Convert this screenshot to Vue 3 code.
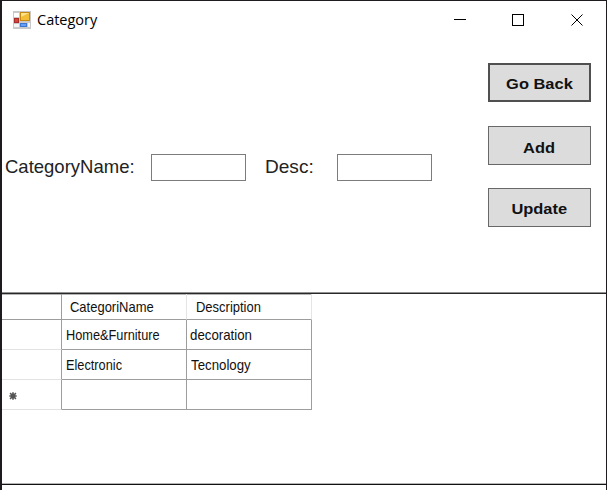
<script setup>
const rows = [
  ['Home&Furniture', 'decoration'],
  ['Electronic', 'Tecnology'],
  ['', ''],
]
</script>

<template>
  <main class="window">
    <header class="titlebar">
      <svg class="app-icon" width="18" height="18" viewBox="0 0 18 18">
        <rect width="18" height="18" fill="#c9c9cc" />
        <rect x="1" y="2" width="5" height="4" fill="#fff" />
        <rect x="1" y="13" width="5" height="3" fill="#f5f5f5" />
        <rect x="15" y="12" width="2" height="4" fill="#f5f5f5" />
        <rect x="7.500" y="1.500" width="9" height="8" fill="#f3bd35" stroke="#c98a14" />
        <path d="M8 6V2h8Z" fill="#ffe28a" />
        <rect x="1.500" y="7.500" width="4" height="4" fill="#d9433c" stroke="#a72c29" />
        <rect x="7.500" y="12.500" width="6" height="3" fill="#63a0f5" stroke="#3f76d2" />
      </svg>
      <span class="title">Category</span>
      <svg class="controls" width="130" height="14" viewBox="0 0 130 14" fill="none" stroke="#000">
        <path d="M0 6.500h12" />
        <rect x="58.500" y="1.500" width="11" height="11" />
        <path d="M117.500 1.500l11 11M128.500 1.500l-11 11" />
      </svg>
    </header>

    <section class="editor">
      <form class="fields" @submit.prevent>
        <label class="name-label" for="name"><span>CategoryName:</span></label>
        <input id="name" type="text" />
        <label class="desc-label" for="desc"><span>Desc:</span></label>
        <input id="desc" type="text" />
      </form>
      <nav class="actions">
        <button class="focused"><span>Go Back</span></button>
        <button><span>Add</span></button>
        <button><span>Update</span></button>
      </nav>
    </section>

    <section class="grid-area">
      <div class="grid">
        <div class="corner"></div>
        <div class="head"><span>CategoriName</span></div>
        <div class="head"><span>Description</span></div>
        <template v-for="(row, r) in rows" :key="r">
          <div class="row-head">
            <svg v-if="r === 2" width="8" height="8" viewBox="0 0 8 8">
              <circle cx="4" cy="4" r="2.700" fill="#555" />
              <path d="M4 0v8M0 4h8M1 1l6 6M7 1l-6 6" stroke="#555" stroke-width="1.200" />
            </svg>
          </div>
          <div v-for="(cell, c) in row" :key="c" class="cell" :class="{ nudge: r === 1 && c === 1 }">
            <span>{{ cell }}</span>
          </div>
        </template>
      </div>
    </section>
    <footer class="bottom"></footer>
  </main>
</template>

<style>
body { margin: 0; overflow: hidden; background: #fff; }
</style>

<style scoped>
* { box-sizing: border-box; }
.window {
  width: 607px;
  height: 490px;
  border: solid #1d1b1e;
  border-width: 1px 1px 0 2px;
  background: #fff;
  color: #111;
  font-family: "Liberation Sans", Arial, sans-serif;
  display: flex;
  flex-direction: column;
}
.titlebar { height: 38px; display: flex; align-items: center; padding: 0 22px 0 11px; flex: none; }
.app-icon { flex: none; }
.title { margin-left: 6px; font: 14.500px/20px "Open Sans", "Noto Sans", sans-serif; color: #000; }
.controls { margin-left: auto; }
.editor { height: 253px; flex: none; display: flex; justify-content: space-between; }
.fields { display: flex; align-items: flex-start; padding: 115px 0 0 3px; }
label { height: 27px; line-height: 25px; font-size: 18.500px; color: #222; white-space: nowrap; }
label span { display: inline-block; transform-origin: left; }
.name-label { width: 146px; }
.desc-label { width: 72px; margin-left: 19px; }
.desc-label span { transform: scaleX(1.030); }
input {
  width: 95px;
  height: 27px;
  border: 1px solid #7c7c7c;
  border-radius: 0;
  padding: 0 4px;
  background: #fff;
  outline: 0;
}
.actions { width: 103px; margin: 24px 15px 0 0; display: flex; flex-direction: column; }
button {
  height: 39px;
  border: 1px solid #686868;
  border-radius: 0;
  background: #dcdcdc;
  padding: 3px 0 0;
  font: bold 15.500px/20px "Liberation Sans", Arial, sans-serif;
  color: #111;
}
button span { display: inline-block; transform: scaleX(1.060); }
button:nth-child(2) { margin-top: 24px; padding-top: 4px; }
button:nth-child(3) { margin-top: 23px; }
.focused { border: 2px solid #505050; padding-top: 2px; }
.grid-area { height: 191px; flex: none; border-top: 1px solid #929292; box-shadow: inset 0 1px #29272a; padding-top: 1px; }
.grid {
  width: 310px;
  display: grid;
  grid-template-columns: 60px 125px 125px;
  grid-template-rows: 26px repeat(3, 30px);
  font-size: 14.500px;
}
.grid > div { display: flex; align-items: center; white-space: nowrap; border: solid #9d9d9d; border-width: 0 1px 1px 0; }
.grid span { display: inline-block; transform-origin: left; transform: scaleX(.895); }
.grid .corner, .grid .head { box-shadow: inset 0 1px #b5b5b5; }
.grid .head { padding: 1px 0 0 8px; border-right-color: #e5e5e5; }
.grid .head + .head { padding-left: 9px; }
.grid .cell { padding: 1px 0 0 4px; }
.grid .cell span { transform: scaleX(.880); }
.grid .cell + .cell { padding-left: 3px; }
.grid .cell + .cell span { transform: scaleX(.915); }
.grid .cell.nudge { padding-left: 4px; }
.grid .row-head { border-bottom-color: #e2e2e2; padding: 3px 0 0 7px; }
.bottom { border-top: 1px solid #b5b5b5; box-shadow: inset 0 1px #141214; height: 7px; }
</style>
